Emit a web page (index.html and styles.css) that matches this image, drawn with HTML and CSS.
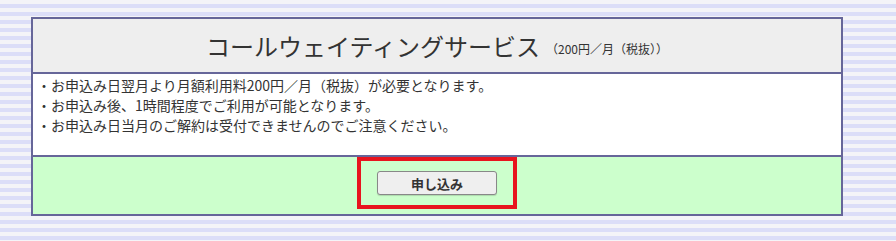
FILE: index.html
```html
<!DOCTYPE html>
<html lang="ja">
<head>
  <meta charset="UTF-8" />
  <title>コールウェイティングサービス</title>
  <link rel="stylesheet" href="styles.css">
</head>
<body>
  <div class="service-box">
    <div class="service-head">
      <span class="service-title">コールウェイティングサービス</span>
      <span class="service-price">（200円／月（税抜））</span>
    </div>
    <div class="service-notes">
      <p>・お申込み日翌月より月額利用料200円／月（税抜）が必要となります。</p>
      <p>・お申込み後、1時間程度でご利用が可能となります。</p>
      <p>・お申込み日当月のご解約は受付できませんのでご注意ください。</p>
    </div>
    <div class="service-foot">
      <div class="apply-frame">
        <button type="button" class="apply-btn">申し込み</button>
      </div>
    </div>
  </div>
</body>
</html>
```

FILE: styles.css
```css
* {
  box-sizing: border-box;
}

body {
  margin: 0;
  padding: 17px 0 0 31px;
  min-height: 241px;
  font-family: "Noto Sans CJK JP", "Noto Sans", sans-serif;
  color: #333;
  background: repeating-linear-gradient(
    to bottom,
    #f4f4f8 0px,
    #f4f4f8 4px,
    #dcdef8 4px,
    #dcdef8 8px
  );
}

.service-box {
  width: 812px;
  border: 2px solid #666699;
  background: #fff;
}

.service-head {
  height: 55px;
  background: #eeeeee;
  border-bottom: 2px solid #666699;
  display: flex;
  justify-content: center;
  align-items: center;
  gap: 6px;
}

.service-title {
  font-size: 24px;
  color: #333;
}

.service-price {
  font-size: 12px;
  padding-top: 6px;
}

.service-notes {
  height: 83px;
  padding: 1px 4px 2px;
  font-size: 14px;
  line-height: 20px;
  border-bottom: 2px solid #666699;
}

.service-notes p {
  margin: 0;
}

.service-foot {
  height: 57px;
  background: #ccffcc;
  display: flex;
  justify-content: center;
  align-items: flex-start;
}

.apply-frame {
  width: 160px;
  height: 52px;
  border: 4px solid #e8141e;
  display: flex;
  justify-content: center;
  align-items: center;
}

.apply-btn {
  width: 120px;
  height: 24px;
  font-family: inherit;
  font-size: 13px;
  font-weight: bold;
  color: #333;
  background: #efefef;
  border: 1px solid #888;
  border-radius: 3px;
  box-shadow: 0 1px 1px rgba(0, 0, 0, 0.15);
  padding: 0;
}
```
